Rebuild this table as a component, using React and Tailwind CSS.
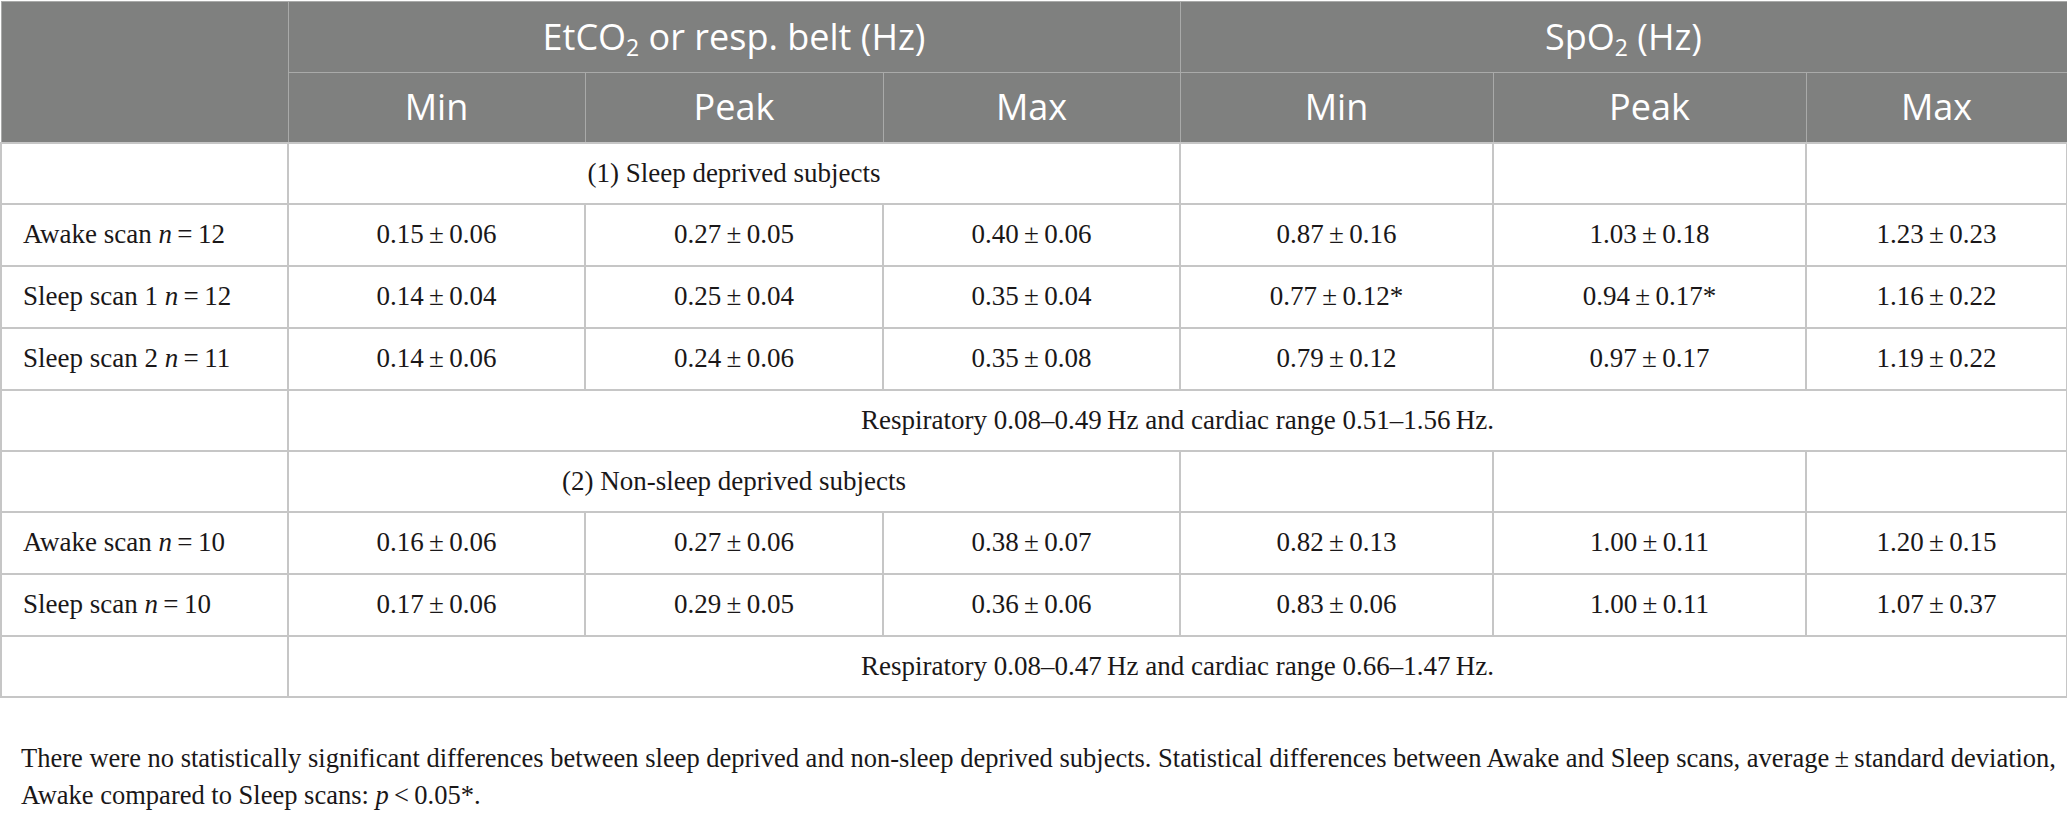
import React from 'react';

const serif = "font-['Liberation_Serif','Times_New_Roman',serif]";
const sans = "font-['Open_Sans','Noto_Sans',sans-serif]";

const PM = '\u2009±\u2009';

const sleepDeprived = [
  { label: 'Awake scan', n: '12', vals: ['0.15', '0.06', '0.27', '0.05', '0.40', '0.06', '0.87', '0.16', '1.03', '0.18', '1.23', '0.23'] },
  { label: 'Sleep scan 1', n: '12', vals: ['0.14', '0.04', '0.25', '0.04', '0.35', '0.04', '0.77', '0.12*', '0.94', '0.17*', '1.16', '0.22'] },
  { label: 'Sleep scan 2', n: '11', vals: ['0.14', '0.06', '0.24', '0.06', '0.35', '0.08', '0.79', '0.12', '0.97', '0.17', '1.19', '0.22'] },
];

const nonDeprived = [
  { label: 'Awake scan', n: '10', vals: ['0.16', '0.06', '0.27', '0.06', '0.38', '0.07', '0.82', '0.13', '1.00', '0.11', '1.20', '0.15'] },
  { label: 'Sleep scan', n: '10', vals: ['0.17', '0.06', '0.29', '0.05', '0.36', '0.06', '0.83', '0.06', '1.00', '0.11', '1.07', '0.37'] },
];

const td = 'border-2 border-[#c6c6c6] text-center align-middle';
const th = 'border border-[#a9aaa9] font-normal text-center align-middle';

function DataRow({ row }) {
  const pairs = [];
  for (let i = 0; i < row.vals.length; i += 2) pairs.push([row.vals[i], row.vals[i + 1]]);
  return (
    <tr className="h-[62px]">
      <td className="border-2 border-[#c6c6c6] text-left pl-[21px] align-middle whitespace-nowrap">
        {row.label} <i>n</i>{'\u2009=\u2009'}{row.n}
      </td>
      {pairs.map(([a, b], i) => (
        <td key={i} className={td}>
          {a}{PM}{b}
        </td>
      ))}
    </tr>
  );
}

function GroupRow({ title }) {
  return (
    <tr className="h-[61px]">
      <td className={td}></td>
      <td colSpan={3} className={td}>{title}</td>
      <td className={td}></td>
      <td className={td}></td>
      <td className={td}></td>
    </tr>
  );
}

function RangeRow({ text }) {
  return (
    <tr className="h-[61px]">
      <td className={td}></td>
      <td colSpan={6} className={td}>{text}</td>
    </tr>
  );
}

export default function App() {
  return (
    <div className="w-[2067px] h-[836px] bg-white pt-px text-[#1a1718]">
      <table className={`w-[2066px] table-fixed border-collapse ${serif} text-[27px]`}>
        <colgroup>
          <col className="w-[287px]" />
          <col className="w-[297px]" />
          <col className="w-[298px]" />
          <col className="w-[297px]" />
          <col className="w-[313px]" />
          <col className="w-[313px]" />
          <col className="w-[261px]" />
        </colgroup>
        <thead className={`bg-[#7f807f] text-white ${sans} text-[36px]`}>
          <tr className="h-[71px]">
            <th rowSpan={2} className={th}></th>
            <th colSpan={3} className={th}>
              EtCO<sub className="text-[23px]">2</sub> or resp. belt (Hz)
            </th>
            <th colSpan={3} className={th}>
              SpO<sub className="text-[23px]">2</sub> (Hz)
            </th>
          </tr>
          <tr className="h-[70px]">
            <th className={th}>Min</th>
            <th className={th}>Peak</th>
            <th className={th}>Max</th>
            <th className={th}>Min</th>
            <th className={th}>Peak</th>
            <th className={th}>Max</th>
          </tr>
        </thead>
        <tbody>
          <GroupRow title="(1) Sleep deprived subjects" />
          {sleepDeprived.map((r, i) => <DataRow key={i} row={r} />)}
          <RangeRow text={'Respiratory 0.08–0.49\u2009Hz and cardiac range 0.51–1.56\u2009Hz.'} />
          <GroupRow title="(2) Non-sleep deprived subjects" />
          {nonDeprived.map((r, i) => <DataRow key={i} row={r} />)}
          <RangeRow text={'Respiratory 0.08–0.47\u2009Hz and cardiac range 0.66–1.47\u2009Hz.'} />
        </tbody>
      </table>

      {/* Footnote */}
      <div className={`mt-[42px] pl-[21px] ${serif} text-[26.5px] leading-[37px] whitespace-nowrap`}>
        <p>
          There were no statistically significant differences between sleep deprived and non-sleep deprived subjects. Statistical differences between Awake and Sleep scans, average{PM}standard deviation,
        </p>
        <p>
          Awake compared to Sleep scans: <i>p</i>{'\u2009<\u2009'}0.05*.
        </p>
      </div>
    </div>
  );
}
